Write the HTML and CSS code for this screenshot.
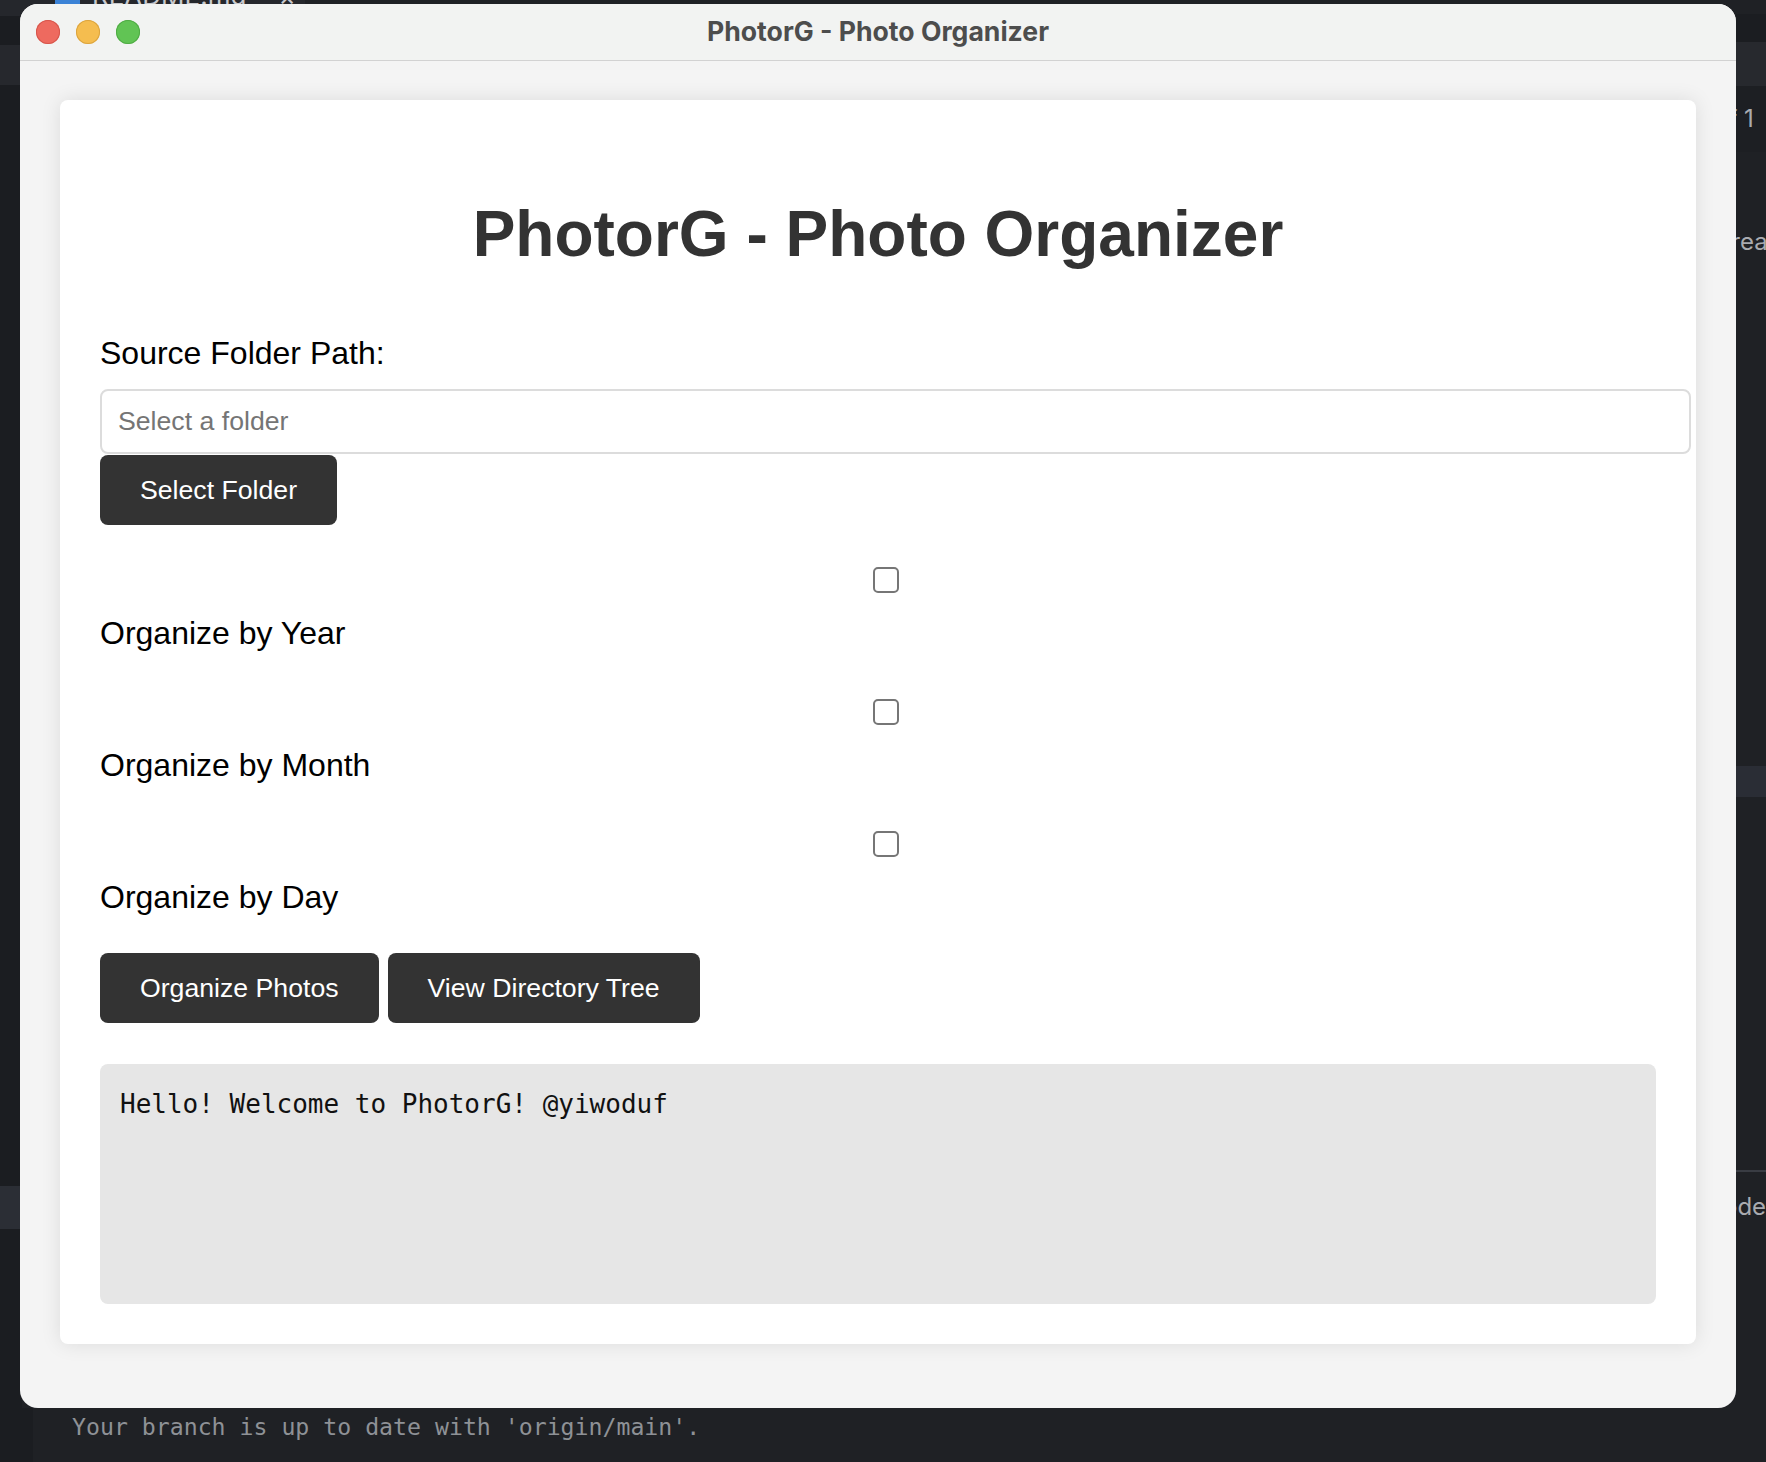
FILE: index.html
```html
<!DOCTYPE html>
<html lang="en">
<head>
<meta charset="utf-8">
<title>PhotorG - Photo Organizer</title>
<link rel="stylesheet" href="styles.css">
</head>
<body>
<div class="desktop">
  <div class="bg-left"></div>
  <div class="bg-left-band1"></div>
  <div class="bg-left-band2"></div>
  <div class="bg-tabstrip">
    <span class="tab-icon"></span>
    <span class="tab-name">README.md</span>
    <span class="tab-close">×</span>
  </div>
  <div class="bg-right-a"></div>
  <div class="bg-right-b"></div>
  <div class="bg-right-c"><span class="bg-text bg-of">of 1</span></div>
  <div class="bg-right-band"></div>
  <div class="bg-right-line"></div>
  <span class="bg-text bg-ready">already</span>
  <span class="bg-text bg-mode">mode</span>
  <div class="bg-bottom-left"></div>
  <div class="terminal-line">Your branch is up to date with 'origin/main'.</div>

  <div class="window">
    <div class="titlebar">
      <div class="lights">
        <span class="light red"></span>
        <span class="light yellow"></span>
        <span class="light green"></span>
      </div>
      <div class="wintitle">PhotorG - Photo Organizer</div>
      <div class="titlebar-spacer"></div>
    </div>
    <div class="winbody">
      <div class="card">
        <h1 class="title">PhotorG - Photo Organizer</h1>
        <label class="field-label" for="src">Source Folder Path:</label>
        <input id="src" class="path-input" type="text" placeholder="Select a folder">
        <div class="select-row"><button class="btn">Select Folder</button></div>

        <div class="option">
          <div class="check-row"><input type="checkbox" class="check" id="y"></div>
          <label class="option-label" for="y">Organize by Year</label>
        </div>
        <div class="option">
          <div class="check-row"><input type="checkbox" class="check" id="m"></div>
          <label class="option-label" for="m">Organize by Month</label>
        </div>
        <div class="option option-last">
          <div class="check-row"><input type="checkbox" class="check" id="d"></div>
          <label class="option-label" for="d">Organize by Day</label>
        </div>

        <div class="actions">
          <button class="btn">Organize Photos</button>
          <button class="btn">View Directory Tree</button>
        </div>

        <div class="output">Hello! Welcome to PhotorG! @yiwoduf</div>
      </div>
    </div>
  </div>
</div>
</body>
</html>
```

FILE: styles.css
```css
* { box-sizing: border-box; }

html, body {
  margin: 0;
  padding: 0;
}

body {
  width: 1766px;
  height: 1462px;
  overflow: hidden;
  background: #1e2024;
  font-family: "Liberation Sans", Arial, sans-serif;
}

.desktop {
  position: relative;
  width: 1766px;
  height: 1462px;
  padding: 4px 0 0 20px;
  background: #1f2125;
  overflow: hidden;
}

/* ---------- backdrop (editor behind the window) ---------- */
.bg-left {
  position: absolute;
  left: 0; top: 0;
  width: 22px; height: 1462px;
  background: #1b1d21;
}
.bg-left-band1 {
  position: absolute;
  left: 0; top: 45px;
  width: 22px; height: 40px;
  background: #26282d;
}
.bg-left-band2 {
  position: absolute;
  left: 0; top: 1186px;
  width: 22px; height: 43px;
  background: #2b2e35;
}
.bg-tabstrip {
  position: absolute;
  left: 0; top: 0;
  width: 305px; height: 16px;
  background: #25272c;
  display: flex;
  align-items: center;
  gap: 12px;
  padding-left: 55px;
}
.tab-icon {
  width: 25px; height: 25px;
  border-radius: 6px;
  background: #3b82d6;
  margin-top: -22px;
}
.tab-name, .tab-close {
  font-family: Inter, sans-serif;
  font-size: 26px;
  color: #c8c9cc;
  margin-top: -26px;
}
.tab-close { margin-left: 20px; }

.bg-right-a {
  position: absolute;
  left: 1736px; top: 14px;
  width: 30px; height: 28px;
  background: #1b1d21;
}
.bg-right-b {
  position: absolute;
  left: 1736px; top: 42px;
  width: 30px; height: 44px;
  background: #27292e;
}
.bg-right-c {
  position: absolute;
  left: 1700px; top: 86px;
  width: 66px; height: 66px;
  background: #1d1f23;
}
.bg-text {
  position: absolute;
  font-family: Inter, "Open Sans", sans-serif;
  font-size: 24px;
  color: #a9abb0;
  white-space: nowrap;
}
.bg-of { left: 14px; top: 18px; }
.bg-ready { left: 1712px; top: 227px; }
.bg-mode { left: 1702px; top: 1192px; }
.bg-right-band {
  position: absolute;
  left: 1736px; top: 766px;
  width: 30px; height: 31px;
  background: #2a2d35;
}
.bg-right-line {
  position: absolute;
  left: 1736px; top: 1170px;
  width: 30px; height: 2px;
  background: #393c43;
}
.bg-bottom-left {
  position: absolute;
  left: 0; top: 1408px;
  width: 33px; height: 54px;
  background: #1b1d21;
}
.terminal-line {
  position: absolute;
  left: 72px; top: 1413px;
  font-family: "DejaVu Sans Mono", "Liberation Mono", monospace;
  font-size: 23.2px;
  color: #8e9196;
  white-space: pre;
}

/* ---------- window ---------- */
.window {
  position: relative;
  z-index: 2;
  width: 1716px;
  height: 1404px;
  border-radius: 18px;
  background: #f4f4f4;
  overflow: hidden;
  display: flex;
  flex-direction: column;
}

.titlebar {
  flex: none;
  height: 57px;
  display: grid;
  grid-template-columns: 1fr auto 1fr;
  align-items: center;
  padding: 0 16px;
  background: #f2f3f2;
  border-bottom: 1px solid #d2d2d2;
}

.lights {
  display: flex;
  gap: 16px;
}
.light {
  width: 24px;
  height: 24px;
  border-radius: 50%;
}
.red { background: #ee6a5f; box-shadow: inset 0 0 0 1px #d6564c; }
.yellow { background: #f5bd4f; box-shadow: inset 0 0 0 1px #dba43f; }
.green { background: #61c454; box-shadow: inset 0 0 0 1px #50ab45; }

.wintitle {
  font-family: Inter, "Liberation Sans", sans-serif;
  font-weight: 700;
  font-size: 26.6px;
  color: #4d4d4d;
  padding-bottom: 3px;
}

.winbody {
  flex: 1;
  padding: 39px 40px 0;
}

/* ---------- card ---------- */
.card {
  background: #fff;
  border-radius: 8px;
  box-shadow: 0 0 20px rgba(0, 0, 0, 0.1);
  padding: 40px;
}

.title {
  margin: 57px 0 64px;
  font-size: 64px;
  line-height: 74px;
  font-weight: 700;
  color: #333;
  text-align: center;
}

.field-label {
  display: block;
  font-size: 32px;
  line-height: 37px;
  color: #000;
  margin-bottom: 17px;
}

.path-input {
  display: block;
  width: calc(100% + 35px);
  height: 65px;
  margin: 0 0 1px;
  padding: 0 16px;
  border: 2px solid #dcdcdc;
  border-radius: 8px;
  background: #fff;
  font-family: "Liberation Sans", Arial, sans-serif;
  font-size: 26.67px;
  color: #000;
  outline: none;
}
.path-input::placeholder { color: #757575; }

.btn {
  height: 70px;
  padding: 0 40px;
  border: 0;
  border-radius: 8px;
  background: #333;
  color: #fff;
  font-family: "Liberation Sans", Arial, sans-serif;
  font-size: 26.67px;
}

.select-row {
  display: flex;
  margin-bottom: 42px;
}

.option { margin-bottom: 47px; }
.option-last { margin-bottom: 37px; }

.check-row {
  display: flex;
  justify-content: center;
  padding-left: 16px;
  height: 26px;
}
.check {
  -webkit-appearance: none;
  appearance: none;
  margin: 0;
  width: 26px;
  height: 26px;
  border: 2px solid #767676;
  border-radius: 5px;
  background: #fff;
}

.option-label {
  display: block;
  margin-top: 22px;
  font-size: 32px;
  line-height: 37px;
  color: #000;
}

.actions {
  display: flex;
  gap: 9px;
  margin-bottom: 41px;
}

.output {
  height: 240px;
  padding: 25px 20px 20px;
  border-radius: 8px;
  background: #e6e6e6;
  font-family: "DejaVu Sans Mono", "Liberation Mono", monospace;
  font-size: 26px;
  color: #111;
  white-space: pre-wrap;
}
```
